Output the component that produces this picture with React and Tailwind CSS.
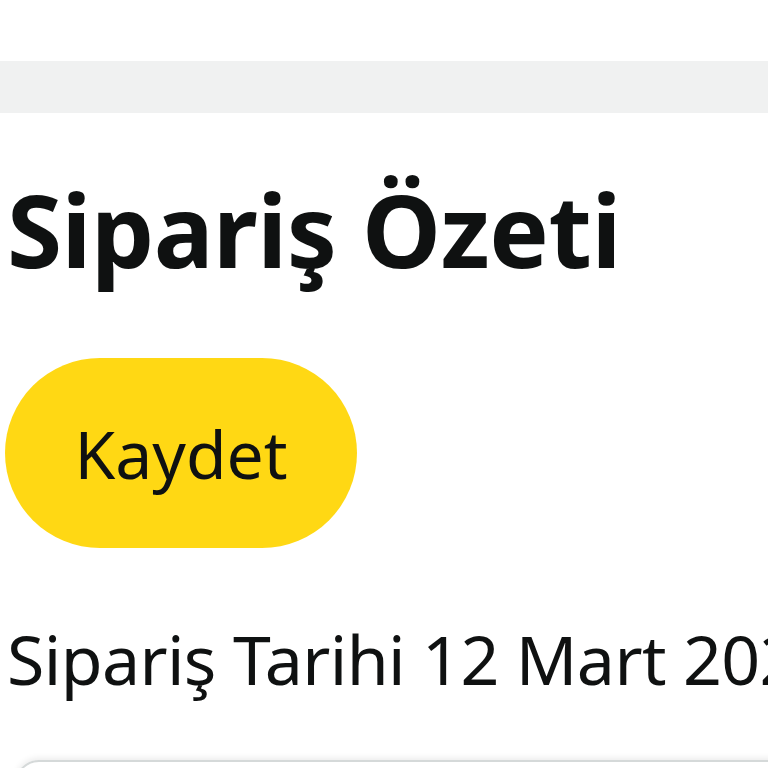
export default function App() {
  return (
    <div className="w-[768px] h-[768px] overflow-hidden bg-white text-[#0f1111] font-['Noto_Sans',sans-serif]">
      <div className="h-[61px]" />
      <div className="h-[52px] bg-[#f0f1f1]" />
      <div className="pl-[5px] pt-[57px]">
        <h1 className="pl-[2px] text-[100px] leading-[118px] font-bold tracking-[-0.5px] whitespace-nowrap">Sipariş Özeti</h1>
        <button className="mt-[70px] w-[352px] h-[190px] rounded-full bg-[#ffd814] text-[66px] text-[#0f1111]">
          Kaydet
        </button>
        <p className="mt-[66px] pl-[2px] text-[68px] leading-[90px] tracking-[-0.6px] whitespace-nowrap">Sipariş Tarihi 12 Mart 2024</p>
        <div className="mt-[56px] ml-[10px] w-[800px] h-[200px] rounded-[24px] border-2 border-[#d5d9d9] shadow-[0_-2px_6px_rgba(0,0,0,0.08)]" />
      </div>
    </div>
  );
}
